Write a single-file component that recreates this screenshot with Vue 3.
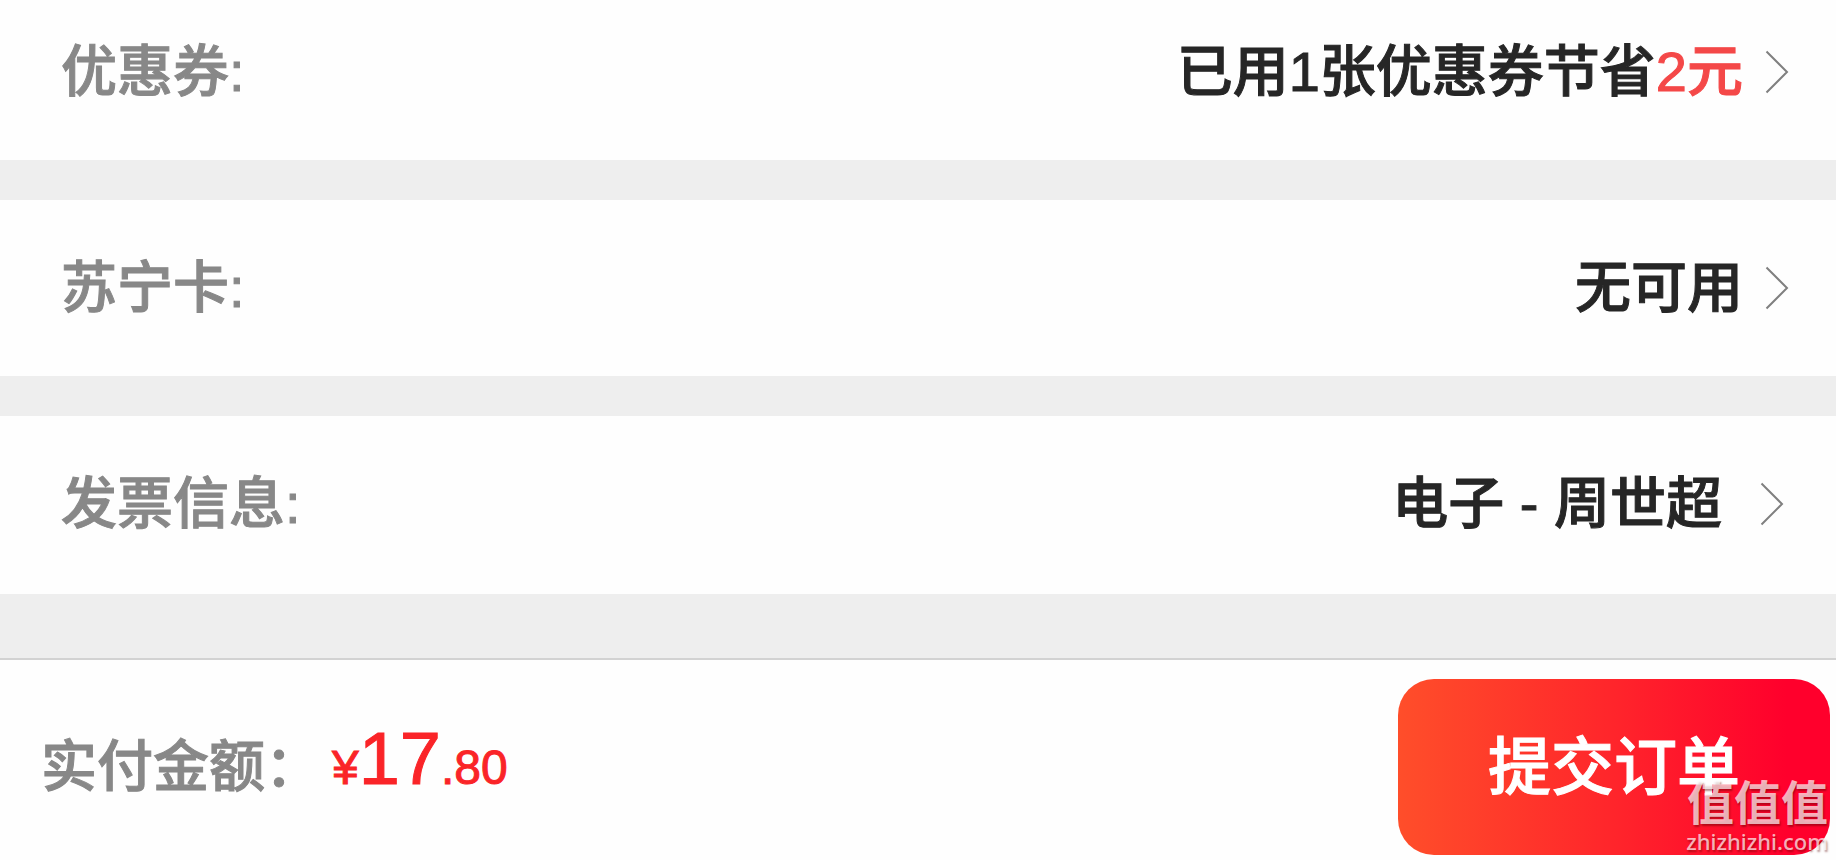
<script setup>
const rows = [
  { id: 'coupon', label: '优惠券:', value: '已用1张优惠券节省', accent: '2元' },
  { id: 'card', label: '苏宁卡:', value: '无可用', accent: '' },
  { id: 'invoice', label: '发票信息:', value: '电子 - 周世超', accent: '' }
]
</script>

<template>
  <div class="page">
    <main class="rows">
      <button v-for="row in rows" :key="row.id" type="button" class="row" :class="row.id">
        <span class="label">{{ row.label }}</span>
        <span class="value">{{ row.value }}<span v-if="row.accent" class="accent">{{ row.accent }}</span></span>
        <svg class="chevron" viewBox="0 0 24 44" aria-hidden="true">
          <path d="M1.5 1.5 L22 22 L1.5 42.5" />
        </svg>
      </button>
    </main>
    <footer class="bar">
      <span class="label">实付金额：</span>
      <span class="price">¥<span class="whole">17</span>.80</span>
      <button type="button" class="submit">提交订单</button>
    </footer>
    <div class="watermark">
      <span class="mark">值值值</span>
      <span class="site">zhizhizhi.com</span>
    </div>
  </div>
</template>

<style>
body {
  margin: 0;
  background: #fefefe;
}
</style>

<style scoped>
.page {
  position: relative;
  display: flex;
  flex-direction: column;
  min-height: 100vh;
  background: #eeeeee;
  font-family: "Liberation Sans", "Noto Sans CJK SC", sans-serif;
  font-size: 56px;
  font-weight: 500;
  line-height: 80px;
  -webkit-text-stroke: 1px currentColor;
}
.rows {
  display: flex;
  flex-direction: column;
  gap: 40px;
  margin-bottom: 64px;
}
.row {
  display: flex;
  align-items: center;
  width: 100%;
  box-sizing: border-box;
  margin: 0;
  padding: 48px 47px 48px 61px;
  border: 0;
  background: #fefefe;
  color: #262626;
  font: inherit;
  text-align: left;
}
.coupon {
  padding-top: 32px;
}
.invoice {
  padding-right: 52px;
  padding-bottom: 50px;
}
.label {
  color: #888888;
}
.value {
  margin-left: auto;
}
.accent {
  color: #f44848;
}
.chevron {
  width: 24px;
  height: 44px;
  margin-left: 22px;
  fill: none;
  stroke: #808080;
  stroke-width: 2;
}
.invoice .chevron {
  margin-left: 38px;
}
.bar {
  display: flex;
  flex: 1;
  align-items: center;
  box-sizing: border-box;
  padding: 14px 6px 0 41px;
  border-top: 2px solid #d2d2d2;
  background: #fefefe;
}
.price {
  margin-left: 11px;
  padding-bottom: 8px;
  color: #fa2428;
  font-size: 48px;
  font-weight: 400;
}
.whole {
  font-size: 74px;
}
.submit {
  width: 432px;
  height: 176px;
  margin: 0 0 0 auto;
  padding: 0;
  border: 0;
  border-radius: 36px;
  background: linear-gradient(90deg, #ff4e2a, #ff252b 50%, #ff002c 90%);
  color: #ffffff;
  font: inherit;
  font-size: 63px;
}
.watermark {
  position: absolute;
  right: 8px;
  bottom: 6px;
  display: flex;
  flex-direction: column;
  align-items: flex-end;
  color: rgba(255, 255, 255, 0.7);
  text-shadow: 1px 2px 2px rgba(90, 0, 0, 0.45);
  pointer-events: none;
  -webkit-text-stroke: 0;
}
.mark {
  font-size: 47px;
  font-weight: 700;
  line-height: 48px;
}
.site {
  font-family: "Noto Sans", sans-serif;
  font-size: 22px;
  line-height: 26px;
}
</style>
